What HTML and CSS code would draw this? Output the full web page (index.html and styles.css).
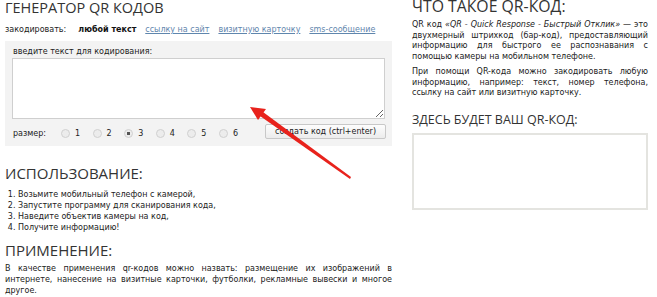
FILE: index.html
```html
<!DOCTYPE html>
<html lang="ru">
<head>
  <meta charset="UTF-8">
  <title>Генератор QR кодов</title>
  <link rel="stylesheet" href="styles.css">
</head>
<body>

  <!-- СТРАНИЦА
   ================================================== -->
  <div class="page">

    <!-- ЛЕВАЯ КОЛОНКА
     ================================================== -->
    <div class="main-column">
      <h1 class="page-title">ГЕНЕРАТОР QR КОДОВ</h1>

      <div class="modes">
        <span class="modes-label">закодировать:</span>
        <b class="mode-current">любой текст</b>
        <a class="mode-link" href="#">ссылку на сайт</a>
        <a class="mode-link" href="#">визитную карточку</a>
        <a class="mode-link" href="#">sms-сообщение</a>
      </div>

      <div class="coder">
        <div class="coder-label">введите текст для кодирования:</div>
        <textarea class="coder-text"></textarea>
        <div class="coder-options">
          <span class="size-label">размер:</span>
          <label class="size-option"><span class="radio"></span>1</label>
          <label class="size-option"><span class="radio"></span>2</label>
          <label class="size-option"><span class="radio checked"></span>3</label>
          <label class="size-option"><span class="radio"></span>4</label>
          <label class="size-option"><span class="radio"></span>5</label>
          <label class="size-option"><span class="radio"></span>6</label>
          <button class="coder-button" type="button">создать код (ctrl+enter)</button>
        </div>
      </div>

      <h2 class="section-title">ИСПОЛЬЗОВАНИЕ:</h2>
      <ol class="steps">
        <li>Возьмите мобильный телефон с камерой,</li>
        <li>Запустите программу для сканирования кода,</li>
        <li>Наведите объектив камеры на код,</li>
        <li>Получите информацию!</li>
      </ol>

      <h2 class="section-title">ПРИМЕНЕНИЕ:</h2>
      <p class="text">В качестве применения qr-кодов можно назвать: размещение их изображений в интернете, нанесение на визитные карточки, футболки, рекламные вывески и многое другое.</p>
    </div>

    <!-- ПРАВАЯ КОЛОНКА
     ================================================== -->
    <div class="side-column">
      <h2 class="side-title">ЧТО ТАКОЕ QR-КОД:</h2>
      <p class="text">QR код <i>«QR - Quick Response - Быстрый Отклик»</i> — это двухмерный штрихкод (бар-код), предоставляющий информацию для быстрого ее распознавания с помощью камеры на мобильном телефоне.</p>
      <p class="text">При помощи QR-кода можно закодировать любую информацию, например: текст, номер телефона, ссылку на сайт или визитную карточку.</p>

      <h3 class="result-title">ЗДЕСЬ БУДЕТ ВАШ QR-КОД:</h3>
      <div class="result-box"></div>
    </div>

  </div>

  <!-- стрелка поверх страницы -->
  <svg class="arrow" width="657" height="297" viewBox="0 0 657 297">
    <polygon points="351,177 350,179 260,116 263,112" fill="#e8221c"/>
    <polygon points="250,107 266,109 258,120" fill="#e8221c"/>
  </svg>
</body>
</html>
```

FILE: styles.css
```css
body {
  margin: 0;
  font-family: 'DejaVu Sans', Verdana, sans-serif;
  font-size: 8px;
  color: #222;
  background: #fff;
}

.page {
  display: flex;
  gap: 20px;
  padding-left: 5px;
}

.main-column {
  width: 387px;
}
.side-column {
  width: 236px;
}

.page-title, .section-title, .side-title, .result-title {
  font-family: 'Open Sans', sans-serif;
  font-weight: normal;
  color: #333;
  margin: 0;
}
.page-title {
  font-size: 14.5px;
  line-height: 16px;
}

.modes {
  display: flex;
  gap: 9px;
  margin-top: 8px;
  line-height: 11px;
}
  .modes-label {
    margin-right: 3px;
  }
  .mode-current {
    color: #111;
  }
  .mode-link {
    color: #5f86ad;
  }

.coder {
  background: #f3f3f3;
  margin: 6px 0 8px;
  padding: 5px 7px 7px;
}
  .coder-label {
    line-height: 11px;
    margin-left: 1px;
  }
  .coder-text {
    display: block;
    box-sizing: border-box;
    width: 373px;
    height: 61px;
    margin: 1px 0 0;
    border: 1px solid #cfcfcf;
    background: #fff;
  }
  .coder-options {
    display: flex;
    align-items: center;
    margin-top: 5px;
    height: 15px;
  }
    .size-label {
      margin: 4px 15px 0 1px;
    }
    .size-option {
      display: flex;
      align-items: center;
      width: 31.6px;
      margin-top: 4px;
    }
    .radio {
      box-sizing: border-box;
      width: 9px;
      height: 9px;
      border: 1px solid #d0d0d0;
      border-radius: 50%;
      background: #ececec;
      margin-right: 5px;
    }
    .radio.checked {
      background: radial-gradient(circle, #555 0 1.5px, #ececec 2px);
    }
    .coder-button {
      margin-left: auto;
      margin-right: -1px;
      height: 15px;
      width: 121px;
      padding: 0;
      font-family: inherit;
      font-size: 8px;
      color: #222;
      border: 1px solid #c8c8c8;
      border-radius: 2px;
      background: linear-gradient(#fdfdfd, #ececec);
    }

.section-title {
  font-size: 15px;
  line-height: 20px;
  margin-top: 7px;
}
.coder + .section-title {
  margin-top: 17px;
}
.steps {
  margin: 6px 0 0;
  padding-left: 13px;
  line-height: 11px;
}
.text {
  margin: 3px 0 0;
  line-height: 11px;
  text-align: justify;
}

.side-title {
  font-size: 15.8px;
  line-height: 12px;
}
.side-column .text {
  line-height: 10.5px;
  margin: 8px 0 0;
}
.side-column .text + .text {
  margin-top: 5px;
}

.result-title {
  font-size: 12.5px;
  line-height: 16px;
  margin-top: 13px;
}
.result-box {
  box-sizing: border-box;
  height: 77px;
  margin-top: 5px;
  border: 2px solid #e4e4e0;
}

.arrow {
  position: absolute;
  left: 0;
  top: 0;
  pointer-events: none;
}
```
